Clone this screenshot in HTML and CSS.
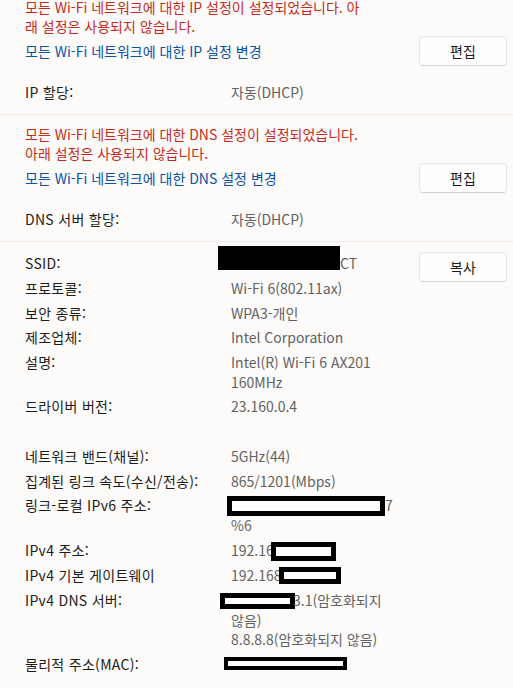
FILE: index.html
```html
<!DOCTYPE html>
<html lang="ko">
<head>
  <meta charset="UTF-8" />
  <meta name="viewport" content="width=device-width, initial-scale=1.0"/>
  <title>Wi-Fi 속성</title>
  <link rel="stylesheet" href="styles.css">
</head>
<body>
  <section class="group first">
    <p class="warn">모든 Wi-Fi 네트워크에 대한 IP 설정이 설정되었습니다. 아<br>래 설정은 사용되지 않습니다.</p>
    <div class="link-row">
      <a class="link" href="#">모든 Wi-Fi 네트워크에 대한 IP 설정 변경</a>
      <button class="btn">편집</button>
    </div>
    <div class="pair">
      <span class="label">IP 할당:</span>
      <span class="val">자동(DHCP)</span>
    </div>
  </section>

  <section class="group">
    <p class="warn">모든 Wi-Fi 네트워크에 대한 DNS 설정이 설정되었습니다.<br>아래 설정은 사용되지 않습니다.</p>
    <div class="link-row">
      <a class="link" href="#">모든 Wi-Fi 네트워크에 대한 DNS 설정 변경</a>
      <button class="btn">편집</button>
    </div>
    <div class="pair">
      <span class="label">DNS 서버 할당:</span>
      <span class="val">자동(DHCP)</span>
    </div>
  </section>

  <section class="details">
    <div class="list">
      <div class="row"><span class="label">SSID:</span><span class="val"><span class="mask solid m-ssid"></span>CT</span></div>
      <div class="row"><span class="label">프로토콜:</span><span class="val">Wi-Fi 6(802.11ax)</span></div>
      <div class="row"><span class="label">보안 종류:</span><span class="val">WPA3-개인</span></div>
      <div class="row"><span class="label">제조업체:</span><span class="val">Intel Corporation</span></div>
      <div class="row"><span class="label">설명:</span><span class="val">Intel(R) Wi-Fi 6 AX201<br>160MHz</span></div>
      <div class="row"><span class="label">드라이버 버전:</span><span class="val">23.160.0.4</span></div>
      <div class="row spacer"></div>
      <div class="row"><span class="label">네트워크 밴드(채널):</span><span class="val">5GHz(44)</span></div>
      <div class="row"><span class="label">집계된 링크 속도(수신/전송):</span><span class="val">865/1201(Mbps)</span></div>
      <div class="row"><span class="label">링크-로컬 IPv6 주소:</span><span class="val"><span class="mask m-v6"></span>7<br>%6</span></div>
      <div class="row"><span class="label">IPv4 주소:</span><span class="val">192.16<span class="mask m-v4"></span></span></div>
      <div class="row"><span class="label">IPv4 기본 게이트웨이</span><span class="val">192.168<span class="mask m-gw"></span></span></div>
      <div class="row"><span class="label">IPv4 DNS 서버:</span><span class="val"><span class="mask m-dns"></span>3.1(암호화되지<br>않음)<br>8.8.8.8(암호화되지 않음)</span></div>
      <div class="row"><span class="label">물리적 주소(MAC):</span><span class="val"><span class="mask m-mac"></span></span></div>
    </div>
    <button class="btn">복사</button>
  </section>
</body>
</html>
```

FILE: styles.css
```css
body {
  margin: 0;
  background: #fcfbfa;
  font-family: "Noto Sans CJK KR", "Malgun Gothic", sans-serif;
  font-size: 14px;
  color: #1b1b1b;
  overflow: hidden;
}
.group {
  padding: 10px 6px 12px 25px;
  border-bottom: 1px solid #f0eae8;
}
.first {
  margin-top: -12px;
}
.warn {
  margin: 0;
  color: #c42b1c;
  line-height: 19px;
}
.link-row {
  display: flex;
  align-items: center;
  justify-content: space-between;
  height: 30px;
}
.link {
  color: #0a52a4;
  text-decoration: none;
}
.btn {
  width: 88px;
  height: 30px;
  background: #fefefe;
  border: 1px solid #e6e6e6;
  border-bottom-color: #d2d2d2;
  border-radius: 4px;
  font-family: inherit;
  font-size: 14px;
  color: #1b1b1b;
  padding: 0;
}
.pair, .row {
  display: grid;
  grid-template-columns: 206px 1fr;
}
.label {
  letter-spacing: 0.3px;
}
.pair {
  margin-top: 16px;
  line-height: 20px;
}
.val {
  color: #626262;
}
.details {
  display: flex;
  align-items: flex-start;
  padding: 10px 6px 0 25px;
}
.list {
  flex: 1;
  padding-top: 2px;
}
.row {
  line-height: 19.5px;
  margin-bottom: 5.25px;
}
.spacer {
  height: 19.5px;
}
.mask {
  display: inline-block;
  box-sizing: border-box;
  vertical-align: top;
  background: #fff;
  border: 5px solid #000;
}
.solid {
  background: #000;
}
.m-ssid {
  width: 122px;
  height: 24px;
  margin: -8px 0 0 -13px;
}
.m-v6 {
  width: 158px;
  height: 20px;
  margin-left: -4px;
}
.m-v4 {
  width: 65px;
  height: 19px;
  margin: 1px 0 0 -3px;
}
.m-gw {
  width: 62px;
  height: 17px;
  margin: 1px 0 0 -3px;
}
.m-dns {
  width: 75px;
  height: 16px;
  margin: 2px -2px 0 -11px;
}
.m-mac {
  width: 123px;
  height: 13px;
  margin: 2px 0 0 -7px;
  border-width: 4px;
}
```
